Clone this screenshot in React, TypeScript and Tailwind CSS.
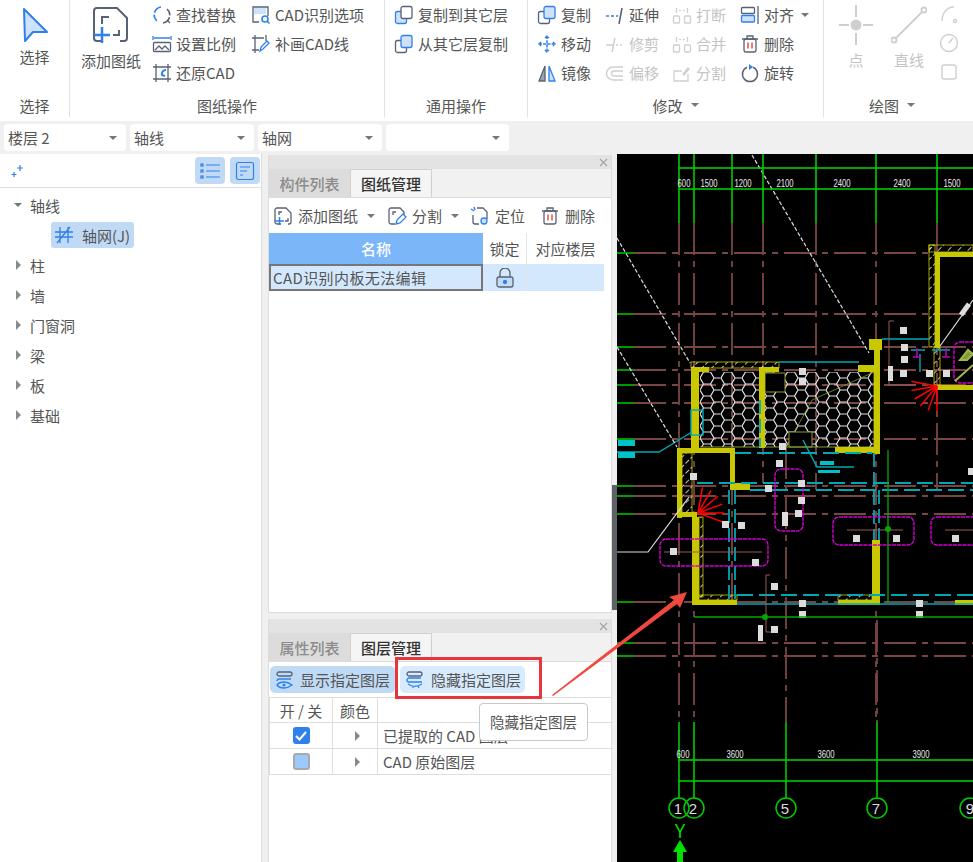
import React from 'react';

const DK = '#596273';
const BL = '#2f80ed';
const LB = '#cfe2fb';
const GR = '#cfcfcf';

const Ico = ({ children, size = 20, box = 20 }: { children: React.ReactNode; size?: number; box?: number }) => (
  <svg width={size} height={size} viewBox={`0 0 ${box} ${box}`} fill="none" strokeWidth={1.3} className="shrink-0">
    {children}
  </svg>
);

const icons: Record<string, React.ReactNode> = {
  find: (
    <>
      <path d="M9 2A8 8 0 0 0 5 16" stroke={BL} strokeWidth={1.6} strokeDasharray="9 2" />
      <path d="M11 18a8 8 0 0 0 4-14" stroke={DK} strokeWidth={1.6} strokeDasharray="9 2" />
      <path d="M15 15l3 3" stroke={DK} />
    </>
  ),
  scale: (
    <>
      <path d="M1 2v4M19 2v4M2 4h16" stroke={BL} />
      <rect x="1.500" y="8.500" width="17" height="9" rx="1" stroke={DK} />
      <path d="M3 16l4-4 3 3 3-3 4 4" stroke={DK} />
    </>
  ),
  restore: (
    <>
      <path d="M4 1v18M16 1v18M1 4h18M1 16h18" stroke={DK} />
      <path d="M14 7a4 4 0 0 0-4 5l3 1" stroke={BL} strokeWidth={2} />
    </>
  ),
  cadopt: (
    <>
      <path d="M8 17H2V2h15v9" stroke={DK} />
      <rect x="3" y="3" width="12" height="6" fill={LB} />
      <circle cx="14" cy="14" r="3" stroke={BL} strokeWidth={1.6} />
      <path d="M16 16l2.500 2.500" stroke={BL} strokeWidth={1.6} />
    </>
  ),
  redraw: (
    <>
      <path d="M4 1v18M1 4h12M1 16h7M15 1v6" stroke={DK} />
      <path d="M9 17l1-4 6-6 2 2-6 6z" stroke={BL} />
    </>
  ),
  copyTo: (
    <>
      <rect x="1.500" y="6.500" width="11" height="12" rx="2" fill={LB} stroke={BL} />
      <rect x="7" y="1.500" width="11" height="12" rx="2" fill="#fff" stroke={DK} />
    </>
  ),
  copyFrom: (
    <>
      <rect x="1.500" y="6.500" width="11" height="12" rx="2" fill="#fff" stroke={DK} />
      <rect x="7" y="1.500" width="11" height="12" rx="2" fill={LB} stroke={BL} />
    </>
  ),
  move: (
    <path d="M10 2v16M2 10h16M8 4l2-2 2 2M8 16l2 2 2-2M4 8l-2 2 2 2M16 8l2 2-2 2" stroke={BL} strokeWidth={1.5} strokeDasharray="3 1.200" />
  ),
  mirror: (
    <>
      <path d="M8 3L2 18h6z" fill="#9aa3b0" stroke={DK} />
      <path d="M12 3l6 15h-6z" fill={LB} stroke={BL} />
    </>
  ),
  extend: (
    <>
      <path d="M1 11h3M6 11h3M11 11h2" stroke={BL} strokeWidth={1.5} />
      <path d="M17 3l-3 16" stroke={DK} strokeWidth={1.5} />
    </>
  ),
  trim: <path d="M1 11h7M11 11h2M15 11h2M10 4L7 18" stroke={GR} strokeWidth={1.5} />,
  offset: <path d="M18 4H8a6 6 0 0 0 0 13h10M18 8H9a2.500 2.500 0 0 0 0 5h9" stroke={GR} strokeWidth={1.4} />,
  breakIt: (
    <>
      <rect x="1.500" y="11" width="6" height="7" rx="1" stroke={GR} />
      <rect x="12.500" y="11" width="6" height="7" rx="1" stroke={GR} />
      <path d="M4.500 3v5M15.500 3v5M7 5l2 1M13 5l-2 1" stroke={GR} />
    </>
  ),
  split2: (
    <>
      <path d="M10 8H2v10h14v-7" stroke={GR} />
      <path d="M11 11l5-6 1 1-5 6z" stroke={GR} />
    </>
  ),
  align: (
    <>
      <rect x="1.500" y="2.500" width="13" height="6" rx="1" stroke={DK} />
      <rect x="1.500" y="10.500" width="13" height="6.500" rx="1" fill={LB} stroke={BL} />
      <path d="M18 1v18" stroke={DK} />
    </>
  ),
  trash: (
    <>
      <path d="M2 5h16M7 5V2h6v3" stroke={DK} />
      <rect x="4" y="5" width="12" height="13" rx="2" stroke={DK} />
      <path d="M8 8.500v6M12 8.500v6" stroke="#e5534b" strokeWidth={1.5} />
    </>
  ),
  rotate: (
    <>
      <path d="M13 4.200a7.500 7.500 0 1 1-6 0" stroke={DK} strokeWidth={1.5} />
      <path d="M9 1l4 3-4 3z" fill={BL} />
    </>
  ),
  add: (
    <>
      <path d="M8 18H4a2 2 0 0 1-2-2V4a2 2 0 0 1 2-2h9l5 5v9a2 2 0 0 1-2 2h-1" stroke={DK} />
      <path d="M6 9V6h3M15 12v3h-3" stroke={DK} />
      <path d="M2 15h9M6.500 11v8" stroke={BL} strokeWidth={1.5} />
    </>
  ),
  split: (
    <>
      <path d="M8 18H4a2 2 0 0 1-2-2V4a2 2 0 0 1 2-2h9l4 4v3" stroke={DK} />
      <path d="M6 9V6h3" stroke={DK} />
      <path d="M9 18l1-4 6-6 3 3-6 6z" stroke={BL} />
    </>
  ),
  locate: (
    <>
      <path d="M3 9v7a2 2 0 0 0 2 2h4M7 2h6l4 4v7" stroke={DK} />
      <path d="M1 3l3 2M4 1l1 3" stroke={BL} strokeWidth={1.5} />
      <circle cx="14" cy="15" r="3" fill={LB} stroke={BL} />
    </>
  ),
};

const RibbonItem = ({ icon, label, off }: { icon: string; label: string; off?: boolean }) => (
  <div className={`flex h-[29px] items-center gap-[4px] ${off ? 'text-[#c4c4c4]' : ''}`}>
    <Ico>{icons[icon]}</Ico>
    <span className="whitespace-nowrap">{label}</span>
  </div>
);

const Caret = ({ className = '' }: { className?: string }) => (
  <span className={`inline-block h-0 w-0 border-x-[4px] border-t-[4px] border-x-transparent border-t-[#777] ${className}`} />
);

const Arrow = () => (
  <span className="inline-block h-0 w-0 border-y-[5px] border-l-[5px] border-y-transparent border-l-[#8a8a8a]" />
);

const Group = ({ w, label, caret, children }: { w: string; label: string; caret?: boolean; children: React.ReactNode }) => (
  <div className={`flex h-[117px] shrink-0 flex-col border-r border-[#e2e2e2] ${w}`}>
    <div className="flex h-[93px]">{children}</div>
    <div className="flex h-[24px] items-center justify-center gap-[8px]">
      {label}
      {caret && <Caret />}
    </div>
  </div>
);

const Select = ({ w, label }: { w: string; label: string }) => (
  <div className={`flex h-[27px] items-center justify-between rounded-[4px] bg-white pl-[4px] pr-[9px] ${w}`}>
    <span>{label}</span>
    <Caret />
  </div>
);

const TreeRow = ({ label, open }: { label: string; open?: boolean }) => (
  <div className="flex h-[30px] items-center">
    <span className="flex w-[30px] justify-center pl-[6px]">{open ? <Caret /> : <Arrow />}</span>
    {label}
  </div>
);

const PanelHead = ({ a, b }: { a: string; b: string }) => (
  <>
    <div className="flex h-[14px] items-center justify-end bg-[#e3e3e3] pr-[3px] text-[#a5a5a5]">
      <svg width="9" height="9" viewBox="0 0 9 9" stroke="currentColor" strokeWidth="1.2">
        <path d="M1 1l7 7M8 1L1 8" />
      </svg>
    </div>
    <div className="flex h-[29px] border-b border-[#dcdcdc] bg-[#f1f1f1]">
      <div className="flex w-[81px] items-center justify-center bg-[#dcdcdc] font-medium text-[#8c8c8c]">{a}</div>
      <div className="flex w-[82px] items-center justify-center border-x border-t border-[#d0d0d0] bg-[#f5f5f5] font-medium text-[#333]">{b}</div>
    </div>
  </>
);

const TB = ({ icon, label, caret, w }: { icon: string; label: string; caret?: boolean; w: string }) => (
  <div className={`flex items-center gap-[5px] ${w}`}>
    <Ico>{icons[icon]}</Ico>
    <span className="whitespace-nowrap">{label}</span>
    {caret && <Caret className="ml-[4px]" />}
  </div>
);

const hLines = [253, 314, 347, 370, 385, 403, 439, 486, 496, 514, 602, 643, 656];
const gridTop = [679, 694, 732, 763, 816, 876, 937];
const gridEnd: Record<number, number> = { 679: 722, 694: 722, 732: 600, 763: 483, 816: 490, 876: 722, 937: 490 };
const labels: [number, number][] = [
  [900, 327], [901, 344], [901, 356], [900, 370], [926, 370], [943, 370], [799, 368], [799, 378], [779, 443], [776, 460],
  [690, 473], [765, 485], [798, 480], [798, 497], [795, 510], [722, 521], [738, 522], [670, 548], [752, 559], [853, 535],
  [893, 535], [952, 535], [968, 468], [771, 583], [799, 600], [799, 611], [916, 600], [916, 611], [771, 626],
];

const CadDrawing = () => (
  <svg viewBox="617 154 356 708" className="block h-[708px] w-[356px] bg-black" fontFamily="Liberation Sans, sans-serif">
    <defs>
      <pattern id="hex" width="21" height="12" patternUnits="userSpaceOnUse" x="700" y="372">
        <path d="M0 6L3.500 0h7l3.500 6-3.500 6h-7zM14 6h7" fill="none" stroke="#e4e4e4" strokeWidth="1.2" />
      </pattern>
      <pattern id="hatch" width="7" height="7" patternUnits="userSpaceOnUse" patternTransform="rotate(45)">
        <path d="M0 0v7" stroke="#eee" strokeWidth="1.6" strokeDasharray="4 2" />
      </pattern>
    </defs>

    {/* brown axis lines */}
    <g stroke="#7a4644" strokeWidth="1.8" strokeDasharray="32 6 6 6">
      {hLines.map((y) => (
        <path key={y} d={`M634 ${y}H973`} />
      ))}
      {gridTop.map((x) => (
        <path key={x} d={`M${x} 223V${gridEnd[x]}`} />
      ))}
      <path d="M786 447V722M877 620V722" />
    </g>
    <g stroke="#0a0" strokeWidth="1.8">
      {hLines.map((y) => (
        <path key={y} d={`M617 ${y}H634`} />
      ))}
    </g>

    {/* hatched room */}
    <rect x="700" y="372" width="174" height="75" fill="url(#hex)" />
    <path d="M786 447L812 400L874 372" stroke="#8a9a30" fill="none" strokeWidth="0.8" />
    <path d="M765 373h20v19h-20z" fill="#000" stroke="#8a9a30" />
    <path d="M789 432h23v15h-23z" fill="#000" stroke="#8a9a30" />
    <path d="M700 447H874V373" fill="none" stroke="#8a9a30" />

    {/* yellow walls */}
    <g fill="#c9c800">
      <rect x="691" y="367" width="8" height="81" />
      <rect x="691" y="367" width="18" height="5" />
      <rect x="760" y="367" width="19" height="5" />
      <rect x="759" y="367" width="6" height="81" />
      <rect x="858" y="365" width="22" height="7" />
      <rect x="874" y="350" width="6" height="104" />
      <rect x="869" y="339" width="13" height="11" />
      <rect x="835" y="447" width="45" height="6" />
      <rect x="935" y="252" width="5" height="96" />
      <rect x="935" y="252" width="38" height="5" />
      <rect x="934" y="385" width="39" height="5" />
      <rect x="677" y="448" width="5" height="70" />
      <rect x="677" y="448" width="58" height="5" />
      <rect x="730" y="448" width="5" height="42" />
      <rect x="730" y="483" width="20" height="7" />
      <rect x="677" y="512" width="20" height="5" />
      <rect x="692" y="517" width="7" height="88" />
      <rect x="692" y="600" width="45" height="5" />
      <rect x="872" y="540" width="8" height="65" />
      <rect x="838" y="600" width="42" height="5" />
      <rect x="955" y="600" width="18" height="5" />
    </g>
    <g fill="url(#hatch)" stroke="#c9c800" strokeWidth="0.8">
      <rect x="691" y="362" width="88" height="6" />
      <rect x="929" y="245" width="44" height="7" />
      <rect x="929" y="245" width="6" height="102" />
      <rect x="934" y="347" width="6" height="38" />
      <rect x="682" y="453" width="10" height="60" />
      <rect x="699" y="517" width="4" height="80" />
      <rect x="699" y="595" width="38" height="5" />
      <rect x="838" y="595" width="34" height="5" />
    </g>

    {/* cyan */}
    <g stroke="#00a8b5" fill="none" strokeWidth="1.4">
      <path d="M779 362H859M882 339H930M911 350H925M932 350H950M920 354V372" />
      <path d="M737 604H973" />
      <rect x="691" y="410" width="12" height="25" />
      <path d="M617 452H659L692 432M803 440L817 467H854" />
      <path d="M729 490V600M735 490V600M874 453V540M879 490V540M760 400V447" strokeDasharray="14 5" strokeWidth="1.8" />
      <path d="M697 483H973M750 490H973M735 453H872M737 595H973" strokeDasharray="16 6" strokeWidth="1.8" />
    </g>
    <rect x="618" y="440" width="17" height="6" fill="#00c0c8" />
    <rect x="618" y="452" width="17" height="6" fill="#00c0c8" />
    <rect x="820" y="461" width="14" height="4" fill="#00c0c8" />
    <rect x="818" y="470" width="22" height="3" fill="#00c0c8" />

    {/* magenta boxes */}
    <g stroke="#d000d0" fill="none" strokeWidth="1.4" strokeDasharray="4 0.8">
      <rect x="660" y="539" width="108" height="27" rx="6" />
      <rect x="775" y="469" width="28" height="62" rx="6" />
      <rect x="833" y="517" width="81" height="28" rx="6" />
      <rect x="931" y="517" width="60" height="28" rx="6" />
      <rect x="954" y="342" width="30" height="41" rx="6" />
    </g>
    <path d="M921 357h-8M917 357v-9M950 357h-8M946 357v-9" stroke="#c000c0" strokeWidth="1.5" />
    <path d="M955 381L973 365M960 360l8-10 5 4-6 6z" stroke="#a3b84a" strokeWidth="2" fill="#7f9a3a" />

    {/* brown leaders */}
    <path d="M894 321H889V385H915M770 575H766V632H772M664 552H762M847 530H903M945 530H973" stroke="#9a5a58" strokeWidth="1" fill="none" />

    {/* red fans */}
    <g stroke="#f00" strokeWidth="1.5" fill="none">
      {[190, 170, 150, 130, 110, 90].map((a) => (
        <path key={a} d={`M937 386l${(26 * Math.cos((a * Math.PI) / 180)).toFixed(1)} ${(26 * Math.sin((a * Math.PI) / 180)).toFixed(1)}`} />
      ))}
      {[-80, -60, -40, -20, 0, 20].map((a) => (
        <path key={a} d={`M698 513l${(26 * Math.cos((a * Math.PI) / 180)).toFixed(1)} ${(26 * Math.sin((a * Math.PI) / 180)).toFixed(1)}`} />
      ))}
    </g>

    {/* white dashes and lines */}
    <g stroke="#ddd" fill="none" strokeWidth="1.2">
      <path d="M752 155L869 353M617 238L690 363M617 347L677 447" strokeDasharray="4 2" />
      <path d="M617 552H648L689 497M940 346L973 300" />
      <path d="M961 315l8-11" strokeWidth="5" />
    </g>
    {labels.map(([x, y]) => (
      <rect key={`${x}-${y}`} x={x} y={y} width="7" height="7" fill="#dcdcdc" />
    ))}
    <rect x="888" y="366" width="5" height="15" fill="#ddd" />
    <rect x="782" y="512" width="6" height="14" fill="#ddd" />
    <rect x="758" y="625" width="5" height="16" fill="#ddd" />

    {/* green grid */}
    <g stroke="#00d800" strokeWidth="1.5" fill="none">
      {gridTop.map((x) => (
        <path key={x} d={`M${x} 154V223`} />
      ))}
      <path d="M679 168H973M679 189H973" />
      {[679, 694, 786, 877].map((x) => (
        <path key={x} d={`M${x} 722V798`} />
      ))}
      <path d="M679 760H973M679 781H973" />
    </g>
    <path d="M888 450V603M694 617H973" stroke="#0a0" strokeWidth="1.3" />
    <circle cx="765" cy="617" r="3" fill="#0a0" />
    <circle cx="888" cy="529" r="3" fill="#0a0" />
    <g fill="#e8e8e8" fontSize="11" textAnchor="middle">
      {[[684, '600'], [709, '1500'], [743, '1200'], [785, '2100'], [842, '2400'], [902, '2400'], [952, '1500']].map(([x, t]) => (
        <text key={`${x}`} x={x} y="187" textLength={`${t}`.length * 4.3} lengthAdjust="spacingAndGlyphs">{t}</text>
      ))}
      {[[683, '600'], [735, '3600'], [826, '3600'], [921, '3900']].map(([x, t]) => (
        <text key={`${x}`} x={x} y="758" textLength={`${t}`.length * 4.3} lengthAdjust="spacingAndGlyphs">{t}</text>
      ))}
    </g>
    <g stroke="#0c0" strokeWidth="1.5" fill="none">
      {[679, 694, 786, 877, 970].map((x) => (
        <circle key={x} cx={x} cy="808" r="10" />
      ))}
    </g>
    <g fill="#ddd" fontSize="15" textAnchor="middle">
      <text x="678" y="814">1</text>
      <text x="693" y="814">2</text>
      <text x="785" y="814">5</text>
      <text x="876" y="814">7</text>
      <text x="970" y="814">9</text>
    </g>
    <text x="680" y="838" fill="#00e000" fontSize="20" textAnchor="middle" textLength="11" lengthAdjust="spacingAndGlyphs">Y</text>
    <path d="M680 840L687 852H683V862H677V852H673z" fill="#00e000" />
  </svg>
);

export default function App() {
  return (
    <div className="relative h-[862px] w-[973px] overflow-hidden bg-[#f0f0f0] font-['Noto_Sans_CJK_SC','Liberation_Sans',sans-serif] text-[15px] leading-none text-[#555]">
      {/* ribbon */}
      <div className="flex h-[121px] bg-white">
        <Group w="w-[70px]" label="选择">
          <div className="flex w-full flex-col items-center gap-[6px] pt-[7px]">
            <svg width="28" height="36" viewBox="0 0 28 36" fill={LB} stroke={BL} strokeWidth="2" strokeLinejoin="round">
              <path d="M3 2l23 23H12L4 34z" />
            </svg>
            <span>选择</span>
          </div>
        </Group>
        <Group w="w-[315px]" label="图纸操作">
          <div className="flex w-[82px] flex-col items-center gap-[8px] pt-[5px]">
            <svg width="40" height="40" viewBox="0 0 40 40" fill="none" stroke={DK} strokeWidth="2">
              <path d="M11 36H6a3 3 0 0 1-3-3V6a3 3 0 0 1 3-3h20l10 10v20a3 3 0 0 1-3 3h-4" />
              <path d="M11 19v-7h7M28 25v5h-6" />
              <path d="M3 30h16M11 22v16" stroke={BL} strokeWidth="2.5" />
            </svg>
            <span className="whitespace-nowrap">添加图纸</span>
          </div>
          <div className="flex w-[99px] flex-col">
            <RibbonItem icon="find" label="查找替换" />
            <RibbonItem icon="scale" label="设置比例" />
            <RibbonItem icon="restore" label="还原CAD" />
          </div>
          <div className="flex flex-col">
            <RibbonItem icon="cadopt" label="CAD识别选项" />
            <RibbonItem icon="redraw" label="补画CAD线" />
          </div>
        </Group>
        <Group w="w-[143px]" label="通用操作">
          <div className="flex flex-col pl-[9px]">
            <RibbonItem icon="copyTo" label="复制到其它层" />
            <RibbonItem icon="copyFrom" label="从其它层复制" />
          </div>
        </Group>
        <Group w="w-[296px]" label="修改" caret>
          <div className="flex pl-[9px]">
            <div className="flex w-[68px] flex-col">
              <RibbonItem icon="copyFrom" label="复制" />
              <RibbonItem icon="move" label="移动" />
              <RibbonItem icon="mirror" label="镜像" />
            </div>
            <div className="flex w-[67px] flex-col">
              <RibbonItem icon="extend" label="延伸" />
              <RibbonItem off icon="trim" label="修剪" />
              <RibbonItem off icon="offset" label="偏移" />
            </div>
            <div className="flex w-[68px] flex-col">
              <RibbonItem off icon="breakIt" label="打断" />
              <RibbonItem off icon="breakIt" label="合并" />
              <RibbonItem off icon="split2" label="分割" />
            </div>
            <div className="flex flex-col">
              <div className="flex items-center gap-[7px]">
                <RibbonItem icon="align" label="对齐" />
                <Caret />
              </div>
              <RibbonItem icon="trash" label="删除" />
              <RibbonItem icon="rotate" label="旋转" />
            </div>
          </div>
        </Group>
        <div className="flex h-[117px] flex-1 flex-col">
          <div className="flex h-[93px] pt-[4px] text-[#c4c4c4]">
            <div className="flex w-[64px] flex-col items-center gap-[6px]">
              <svg width="36" height="42" viewBox="0 0 36 42" stroke={GR} strokeWidth="2">
                <path d="M18 1v12M18 29v12M1 21h10M25 21h10" />
                <circle cx="18" cy="21" r="4.500" fill={GR} />
              </svg>
              <span>点</span>
            </div>
            <div className="flex w-[42px] flex-col items-center gap-[6px]">
              <svg width="36" height="42" viewBox="0 0 36 42" fill="none" stroke={GR} strokeWidth="2">
                <circle cx="33" cy="6" r="2.500" />
                <circle cx="3" cy="36" r="2.500" />
                <path d="M31 8L5 34" />
              </svg>
              <span>直线</span>
            </div>
            <div className="flex flex-col gap-[9px] pl-[9px]">
              <svg width="20" height="20" viewBox="0 0 20 20" fill="none" stroke={GR} strokeWidth="1.4">
                <path d="M3 17C3 9 8 3 15 3" />
                <circle cx="16" cy="17" r="1.500" />
              </svg>
              <svg width="20" height="20" viewBox="0 0 20 20" fill="none" stroke={GR} strokeWidth="1.4">
                <circle cx="10" cy="10" r="8.500" />
                <path d="M10 10l4-5" />
              </svg>
              <svg width="20" height="20" viewBox="0 0 20 20" fill="none" stroke={GR} strokeWidth="1.4">
                <rect x="3" y="3" width="14" height="14" rx="2" />
              </svg>
            </div>
          </div>
          <div className="flex h-[24px] items-center gap-[8px] pl-[45px]">
            绘图
            <Caret />
          </div>
        </div>
      </div>

      {/* selects */}
      <div className="flex h-[33px] items-center gap-[4px] pl-[4px]">
        <Select w="w-[122px]" label="楼层 2" />
        <Select w="w-[124px]" label="轴线" />
        <Select w="w-[124px]" label="轴网" />
        <Select w="w-[123px]" label="" />
      </div>

      <div className="flex h-[708px]">
        {/* tree panel */}
        <div className="w-[262px] shrink-0 border-r border-[#ddd] bg-white">
          <div className="flex h-[34px] items-center justify-between border-b border-[#ddd] pl-[10px] pr-[1px]">
            <svg width="14" height="14" viewBox="0 0 14 14" stroke={BL} strokeWidth="1.2">
              <path d="M10 1v6M7 4h6M4 8v5M1.500 10.500h5" />
            </svg>
            <div className="flex gap-[5px]">
              <div className="flex h-[27px] w-[30px] items-center justify-center rounded-[4px] bg-[#c0daf5]">
                <svg width="20" height="16" viewBox="0 0 20 16" fill="none" stroke={BL} strokeWidth="1.2">
                  <path d="M6 2h14M6 8h14M6 14h14" />
                  <rect x="1" y="1" width="2" height="2" />
                  <rect x="1" y="7" width="2" height="2" />
                  <rect x="1" y="13" width="2" height="2" />
                </svg>
              </div>
              <div className="flex h-[27px] w-[30px] items-center justify-center rounded-[4px] bg-[#c0daf5]">
                <svg width="20" height="20" viewBox="0 0 20 20" fill="none" stroke={BL} strokeWidth="1.2">
                  <rect x="1.500" y="1.500" width="17" height="17" rx="2" />
                  <path d="M5 6h10M5 10h7M5 14h3" />
                </svg>
              </div>
            </div>
          </div>
          <div className="pt-[2px]">
            <TreeRow label="轴线" open />
            <div className="flex h-[30px] items-center pl-[51px]">
              <div className="flex h-[26px] w-[83px] items-center gap-[8px] rounded-[3px] bg-[#c0daf5] pl-[3px]">
                <svg width="20" height="20" viewBox="0 0 20 20" fill="none" stroke={BL} strokeWidth="1.3">
                  <path d="M6 2v16M14 2v16M1 7h18M1 12h18M3 18L16 2" />
                </svg>
                <span className="whitespace-nowrap">轴网(J)</span>
              </div>
            </div>
            {['柱', '墙', '门窗洞', '梁', '板', '基础'].map((t) => (
              <TreeRow key={t} label={t} />
            ))}
          </div>
        </div>

        {/* middle panels */}
        <div className="ml-[6px] flex w-[344px] shrink-0 flex-col gap-[6px] pt-[1px]">
          <div className="h-[458px] border-x border-b border-[#ddd] bg-white">
            <PanelHead a="构件列表" b="图纸管理" />
            <div className="flex h-[35px] items-center pl-[4px]">
              <TB w="w-[114px]" icon="add" label="添加图纸" caret />
              <TB w="w-[83px]" icon="split" label="分割" caret />
              <TB w="w-[70px]" icon="locate" label="定位" />
              <TB w="" icon="trash" label="删除" />
            </div>
            <div className="grid w-[335px] grid-cols-[214px_44px_77px]">
              <div className="flex h-[31px] items-center justify-center bg-[#7ab6f8] font-medium text-white">名称</div>
              <div className="flex items-center justify-center border-r border-[#e6e6e6]">锁定</div>
              <div className="flex items-center justify-center">对应楼层</div>
              <div className="flex h-[27px] items-center border-2 border-[#777] bg-[#d3e8fd] pl-[2px] tracking-[0.4px]">CAD识别内板无法编辑</div>
              <div className="flex items-center justify-center border-r border-[#e6e6e6] bg-[#d3e8fd]">
                <svg width="18" height="20" viewBox="0 0 18 20" fill="none" stroke={DK} strokeWidth="1.3">
                  <path d="M4 9V5a5 5 0 0 1 10 0v4" />
                  <rect x="1" y="9" width="16" height="10" rx="2" fill="#c3dbf5" />
                  <circle cx="9" cy="14" r="1.500" fill={BL} stroke={BL} />
                </svg>
              </div>
              <div className="bg-[#d3e8fd]" />
            </div>
          </div>
          <div className="flex-1 border-x border-[#ddd] bg-white">
            <PanelHead a="属性列表" b="图层管理" />
            <div className="flex h-[35px] items-center gap-[5px] pl-[1px]">
              <div className="flex h-[27px] w-[125px] items-center gap-[5px] rounded-[5px] bg-[#bfdaf5] pl-[5px]">
                <Ico>
                  <rect x="2" y="2" width="15" height="4" rx="2" stroke={DK} />
                  <path d="M16 9H4a2 2 0 0 0-2 2" stroke={BL} />
                  <path d="M2 15c3-4 10-4 15 0-5 4-12 4-15 0z" stroke={BL} />
                  <circle cx="9" cy="15" r="1.500" fill={BL} />
                </Ico>
                <span className="whitespace-nowrap">显示指定图层</span>
              </div>
              <div className="flex h-[27px] w-[125px] items-center gap-[6px] rounded-[5px] bg-[#d8ebfd] pl-[5px]">
                <Ico>
                  <rect x="2" y="2" width="15" height="4" rx="2" stroke={DK} />
                  <path d="M16 8H4a2 2 0 0 0 0 4h13" stroke={BL} />
                  <path d="M3 14c4 3 9 3 14 0M8 16v2M13 16l1 2" stroke={BL} />
                </Ico>
                <span className="whitespace-nowrap">隐藏指定图层</span>
              </div>
            </div>
            <div className="grid w-[343px] grid-cols-[63px_45px_235px] border border-[#dedede]">
              <div className="flex h-[24px] items-center justify-center border-r border-[#dedede]">开 / 关</div>
              <div className="flex items-center justify-center border-r border-[#dedede]">颜色</div>
              <div />
              <div className="flex h-[26px] items-center justify-center border-r border-t border-[#dedede]">
                <span className="flex h-[17px] w-[17px] items-center justify-center rounded-[3px] bg-[#2f80ed]">
                  <svg width="12" height="10" viewBox="0 0 12 10" fill="none" stroke="#fff" strokeWidth="2">
                    <path d="M1 5l3.500 3.500L11 1" />
                  </svg>
                </span>
              </div>
              <div className="flex items-center justify-center border-r border-t border-[#dedede] pl-[4px]"><Arrow /></div>
              <div className="flex items-center border-t border-[#dedede] pl-[5px]">已提取的 CAD 图层</div>
              <div className="flex h-[26px] items-center justify-center border-r border-t border-[#dedede]">
                <span className="h-[17px] w-[17px] rounded-[3px] border-2 border-[#a9a9a9] bg-[#9ccaff]" />
              </div>
              <div className="flex items-center justify-center border-r border-t border-[#dedede] pl-[4px]"><Arrow /></div>
              <div className="flex items-center border-t border-[#dedede] pl-[5px]">CAD 原始图层</div>
            </div>
          </div>
        </div>

        {/* splitter */}
        <div className="w-[5px] shrink-0 pt-[331px]">
          <div className="h-[125px] w-[5px] bg-[#5f6368]" />
        </div>

        <CadDrawing />
      </div>

      {/* annotation over the screenshot */}
      <div className="absolute left-[395px] top-[657px] h-[42px] w-[147px] border-[3px] border-[#e8343c]" />
      <svg className="absolute left-0 top-0" width="973" height="862" fill="#f0483e">
        <path d="M552 695L674 600L669 597L687 592L680 608L677 604L553 696z" />
      </svg>
      <div className="absolute left-[479px] top-[703px] flex h-[38px] w-[109px] items-center justify-center rounded-[4px] border border-[#c8c8c8] bg-white text-[14.5px]">
        隐藏指定图层
      </div>
    </div>
  );
}
